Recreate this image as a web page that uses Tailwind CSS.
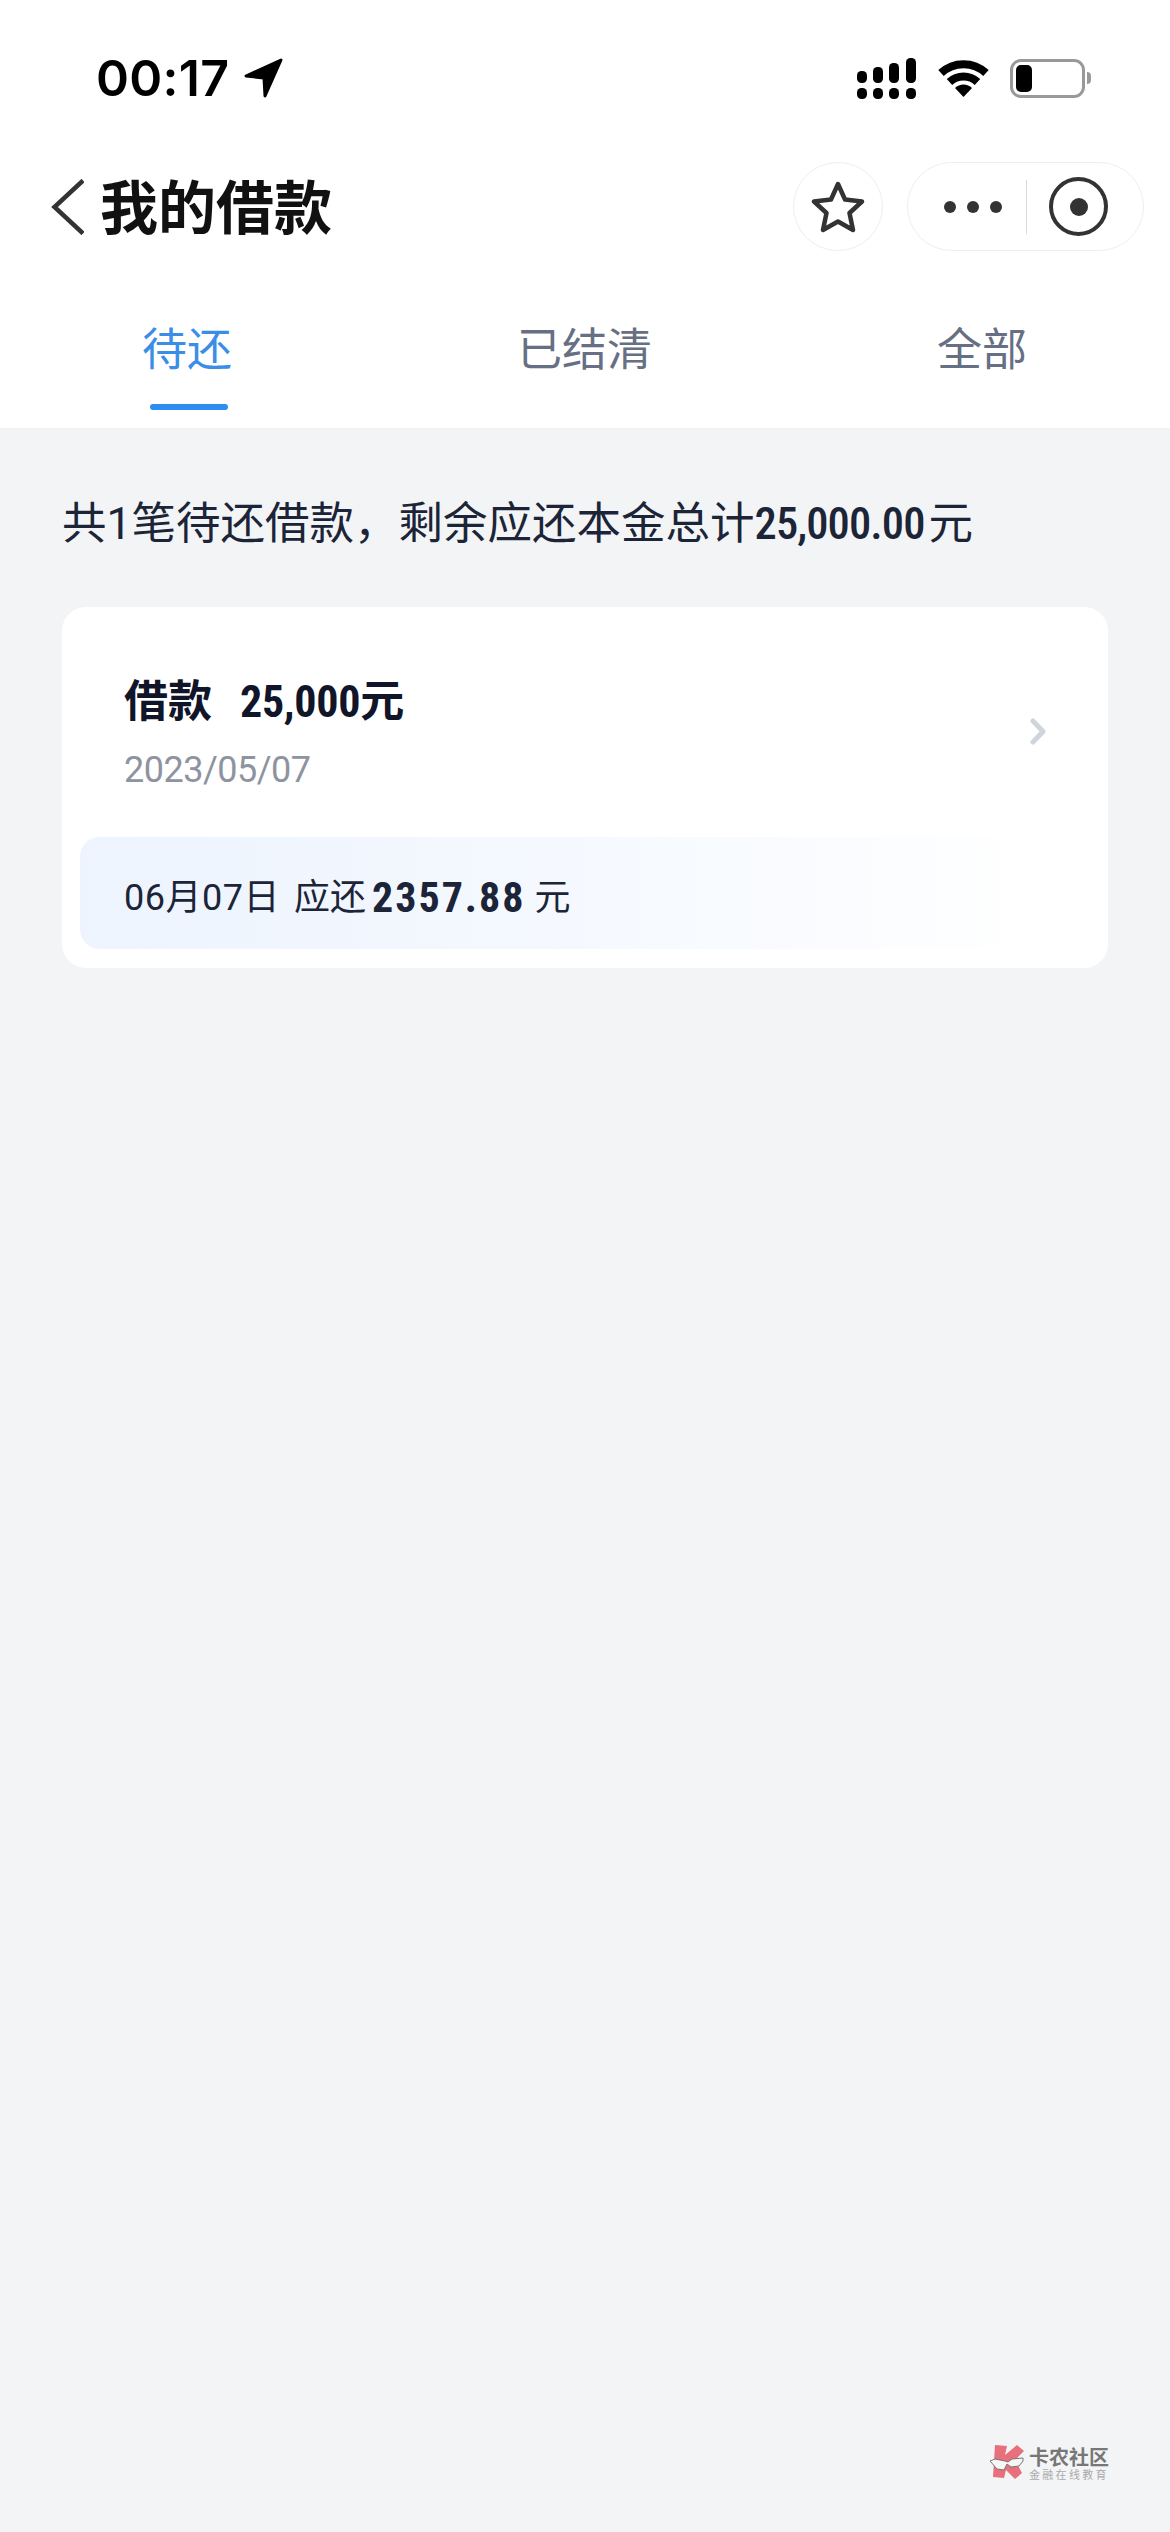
<!DOCTYPE html>
<html lang="zh-CN">
<head>
    <meta charset="UTF-8">
    <meta name="viewport" content="width=device-width, initial-scale=1.0">
    <title>我的借款</title>
    <script src="https://cdn.jsdelivr.net/npm/@tailwindcss/browser@4"></script>
</head>
<body class="relative w-[1170px] h-[2532px] overflow-hidden bg-[#f3f4f6] font-['Roboto','Noto_Sans_CJK_SC',sans-serif]">
    <!-- 顶部白色区域 -->
    <header class="bg-white border-b border-[#f0f1f3]">
        <!-- 状态栏 -->
        <div class="h-[156px] flex items-center justify-between pl-[96px] pr-[79px]">
            <div class="flex items-center gap-[15px]">
                <span class="font-['Inter',sans-serif] font-semibold text-[50px] leading-none tracking-[0.3px] text-black">00:17</span>
                <svg class="w-[40px] h-[40px]" viewBox="0 0 40 40"><path d="M37 2 L2 18 L20 20 L21 38 Z" fill="#000" stroke="#000" stroke-width="3" stroke-linejoin="round"/></svg>
            </div>
            <div class="flex items-center gap-[21px]">
                <svg class="w-[60px] h-[41px]" viewBox="0 0 60 41" fill="#000">
                    <rect x="0" y="13" width="10" height="12" rx="4.5"/><rect x="16" y="9" width="10" height="16" rx="4.5"/><rect x="32" y="5" width="10" height="20" rx="4.5"/><rect x="49" y="0" width="10" height="25" rx="4.5"/>
                    <rect x="0" y="30" width="10" height="11" rx="4.5"/><rect x="16" y="30" width="10" height="11" rx="4.5"/><rect x="32" y="30" width="10" height="11" rx="4.5"/><rect x="49" y="30" width="10" height="11" rx="4.5"/>
                </svg>
                <svg class="w-[51px] h-[37px]" viewBox="0 0 51 37" fill="none" stroke="#000" stroke-width="8">
                    <path d="M3 13 A33 33 0 0 1 48 13"/>
                    <path d="M11.5 22 A20.5 20.5 0 0 1 39.5 22"/>
                    <path d="M25.5 37 L17 28 A12 12 0 0 1 34 28 Z" fill="#000" stroke="none"/>
                </svg>
                <div class="flex items-center gap-[2px]">
                    <div class="w-[75px] h-[39px] rounded-[11px] border-[3px] border-[#999] p-[3px] bg-white">
                        <div class="w-[16px] h-full rounded-[5px] bg-black"></div>
                    </div>
                    <div class="w-[4px] h-[12px] rounded-r-full bg-[#999]"></div>
                </div>
            </div>
        </div>

        <!-- 导航栏 -->
        <div class="mt-[6px] h-[89px] flex items-center justify-between pl-[51px] pr-[26px]">
            <div class="flex items-center gap-[16px]">
                <svg class="w-[33px] h-[56px]" viewBox="0 0 33 56" fill="none" stroke="#333" stroke-width="4.5"><path d="M32 1.5 L3.5 28 L32 54.5"/></svg>
                <h1 class="-mt-[5px] text-[58px] leading-none font-bold text-[#111] font-['Noto_Sans_CJK_SC',sans-serif]">我的借款</h1>
            </div>
            <div class="flex items-center gap-[24px]">
                <div class="w-[90px] h-[89px] rounded-full border border-[#eeeeee] flex items-center justify-center">
                    <svg class="w-[54px] h-[52px]" viewBox="0 0 54 52" fill="none" stroke="#333" stroke-width="4.5" stroke-linejoin="round"><path d="M27 3 L34 18.5 L51 20.5 L38.5 32 L42 49 L27 40.5 L12 49 L15.500 32 L3 20.500 L20 18.500 Z"/></svg>
                </div>
                <div class="w-[237px] h-[89px] rounded-full border border-[#eeeeee] flex items-center pl-[36px]">
                    <div class="flex items-center gap-[11px]">
                        <span class="w-[12px] h-[12px] rounded-full bg-[#333]"></span>
                        <span class="w-[12px] h-[12px] rounded-full bg-[#333]"></span>
                        <span class="w-[12px] h-[12px] rounded-full bg-[#333]"></span>
                    </div>
                    <div class="ml-[24px] w-px h-[54px] bg-[#d9d9d9]"></div>
                    <div class="ml-[22px] w-[59px] h-[59px] rounded-full border-[4px] border-[#333] flex items-center justify-center">
                        <span class="w-[18px] h-[18px] rounded-full bg-[#333]"></span>
                    </div>
                </div>
            </div>
        </div>

        <!-- 标签页 -->
        <nav class="h-[177px] pt-[70px] pl-[142px] pr-[143px] flex justify-between text-[45px] leading-[60px] text-[#666f83]">
            <div class="flex flex-col items-center">
                <span class="text-[#3a8ee6]">待还</span>
                <span class="mt-[23px] ml-[3px] w-[78px] h-[6px] rounded-full bg-[#2b8ef0]"></span>
            </div>
            <span>已结清</span>
            <span>全部</span>
        </nav>
    </header>

    <main class="px-[62px] pt-[65px]">
        <p class="text-[44.5px] leading-[60px] text-[#1c2438]">共<span class="tracking-[-5px]">1</span><span class="ml-[5px]">笔待还借款，剩余应还本金总计</span><span class="font-medium font-stretch-[80%] tracking-[-0.9px]">25,000.00</span><span class="ml-[4px]">元</span></p>

        <!-- 借款卡片 -->
        <section class="mt-[53px] h-[361px] rounded-[24px] bg-white pt-[67px] flex flex-col">
            <div class="h-[163px] pl-[62px] pr-[62px] flex items-start justify-between">
                <div>
                    <div class="flex items-center text-[44px] leading-[56px] font-bold text-[#11152a]">
                        <span>借款</span>
                        <span class="ml-[28px] font-stretch-[80%] tracking-[-0.3px]">25,000元</span>
                    </div>
                    <p class="mt-[18px] text-[36px] leading-[44px] font-stretch-[90%] tracking-[-0.5px] text-[#8e93a1]">2023/05/07</p>
                </div>
                <svg class="mt-[44px] w-[16px] h-[27px]" viewBox="0 0 16 27" fill="none" stroke="#d0d5dc" stroke-width="5" stroke-linecap="round" stroke-linejoin="round"><path d="M3 3 L13 13.500 L3 24"/></svg>
            </div>
            <div class="mx-[18px] h-[112px] rounded-[20px] bg-gradient-to-r from-[#edf4fe] via-[#f7faff] via-60% to-white to-95% pl-[44px] pt-[10px] flex items-center text-[36px] leading-none text-[#1c2438]">
                <span class="tracking-[0.5px]">06月07日</span>
                <span class="ml-[14px]">应还</span>
                <span class="ml-[6px] font-bold text-[42px] font-stretch-[85%] tracking-[2px]">2357.88</span>
                <span class="ml-[9px]">元</span>
            </div>
        </section>
    </main>

    <!-- 水印 -->
    <div class="absolute left-[990px] top-[2444px] flex items-center gap-[5px]">
        <svg class="w-[34px] h-[37px]" viewBox="0 0 34 37">
            <path d="M5 1 L17 2 L15 11 L27 1 L34 7 L25 16 L32 29 L25 35 L16 26 L14 34 L3 33 Z" fill="#e8707c"/>
            <path d="M0 17 L5 15 L15 17 L18 18 L22 15 L33 14 L33 17 L29 22 L21 23 L17 20 L14 26 L7 25 Z" fill="#f6f6f6" stroke="#777" stroke-width="1"/>
        </svg>
        <div class="flex flex-col items-start font-['Noto_Sans_CJK_SC',sans-serif]">
            <span class="text-[20px] leading-[22px] font-bold text-[#777]">卡农社区</span>
            <span class="text-[11px] leading-[12px] tracking-[2.300px] text-[#aaa]">金融在线教育</span>
        </div>
    </div>
</body>
</html>
